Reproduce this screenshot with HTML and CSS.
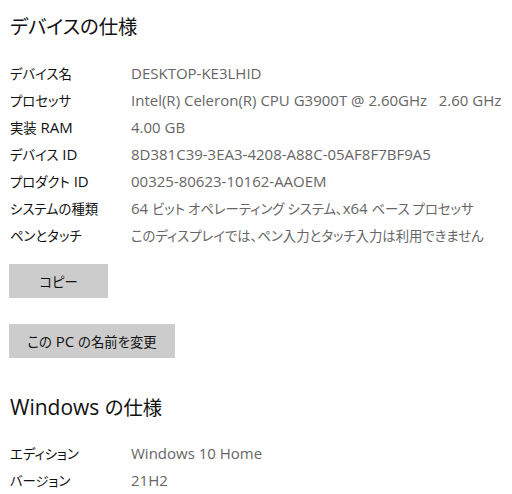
FILE: index.html
```html
<!DOCTYPE html>
<html lang="ja">
<head>
    <meta charset="UTF-8">
    <meta name="viewport" content="width=device-width, initial-scale=1">
    <title>バージョン情報</title>
    <link rel="stylesheet" href="styles.css">
</head>
<body>
<div class="page">
    <!-- デバイスの仕様 -->
    <h2 class="section-title"><span class="ja">デバイスの仕様</span></h2>
    <dl class="specs">
        <dt><span class="ja">デバイス名</span></dt><dd>DESKTOP-KE3LHID</dd>
        <dt><span class="ja">プロセッサ</span></dt><dd>Intel(R) Celeron(R) CPU G3900T @ 2.60GHz&nbsp;&nbsp;&nbsp;2.60 GHz</dd>
        <dt><span class="ja">実装</span> RAM</dt><dd>4.00 GB</dd>
        <dt><span class="ja">デバイス</span> ID</dt><dd>8D381C39-3EA3-4208-A88C-05AF8F7BF9A5</dd>
        <dt><span class="ja">プロダクト</span> ID</dt><dd>00325-80623-10162-AAOEM</dd>
        <dt><span class="ja">システムの種類</span></dt><dd>64 <span class="ja">ビット オペレーティング システム、</span>x64 <span class="ja">ベース プロセッサ</span></dd>
        <dt><span class="ja">ペンとタッチ</span></dt><dd><span class="ja">このディスプレイでは、ペン入力とタッチ入力は利用できません</span></dd>
    </dl>
    <div class="actions">
        <button class="btn btn-copy"><span class="ja">コピー</span></button>
        <button class="btn btn-rename"><span class="ja">この</span> PC <span class="ja">の名前を変更</span></button>
    </div>

    <!-- Windows の仕様 -->
    <h2 class="section-title windows">Windows <span class="ja">の仕様</span></h2>
    <dl class="specs">
        <dt><span class="ja">エディション</span></dt><dd>Windows 10 Home</dd>
        <dt><span class="ja">バージョン</span></dt><dd>21H2</dd>
    </dl>
</div>
</body>
</html>
```

FILE: styles.css
```css
* { box-sizing: border-box; }
body {
  margin: 0;
  background: #fff;
  color: #111;
  font-family: "Open Sans", "Noto Sans CJK JP", sans-serif;
  overflow: hidden;
}
/* japanese runs: narrower, proportional kana */
.ja {
  font-family: "Noto Sans CJK JP", sans-serif;
  font-feature-settings: "palt";
  font-size: 0.89em;
}
.page {
  padding: 12px 10px;
}
.section-title {
  margin: 0 0 19px;
  font-size: 21px;
  line-height: 28px;
  font-weight: normal;
  color: #111;
}
.section-title .ja { font-size: 0.92em; }
.section-title.windows { margin-top: 35px; margin-bottom: 18px; }
/* label / value rows */
.specs {
  display: grid;
  grid-template-columns: 121px 1fr;
  grid-auto-rows: 27px;
  align-items: center;
  margin: 0;
  font-size: 15px;
  white-space: nowrap;
}
.specs dt { color: #111; }
.specs dd { margin: 0; color: #666; }
.actions {
  display: flex;
  flex-direction: column;
  align-items: flex-start;
  gap: 26px;
  margin-top: 16px;
}
.btn {
  height: 34px;
  padding: 0 16px;
  border: none;
  background: #cccccc;
  color: #111;
  font-family: inherit;
  font-size: 15px;
  margin-left: -1px;
}
.btn-copy { width: 99px; }
.btn-rename { width: 166px; padding: 0; }
```
